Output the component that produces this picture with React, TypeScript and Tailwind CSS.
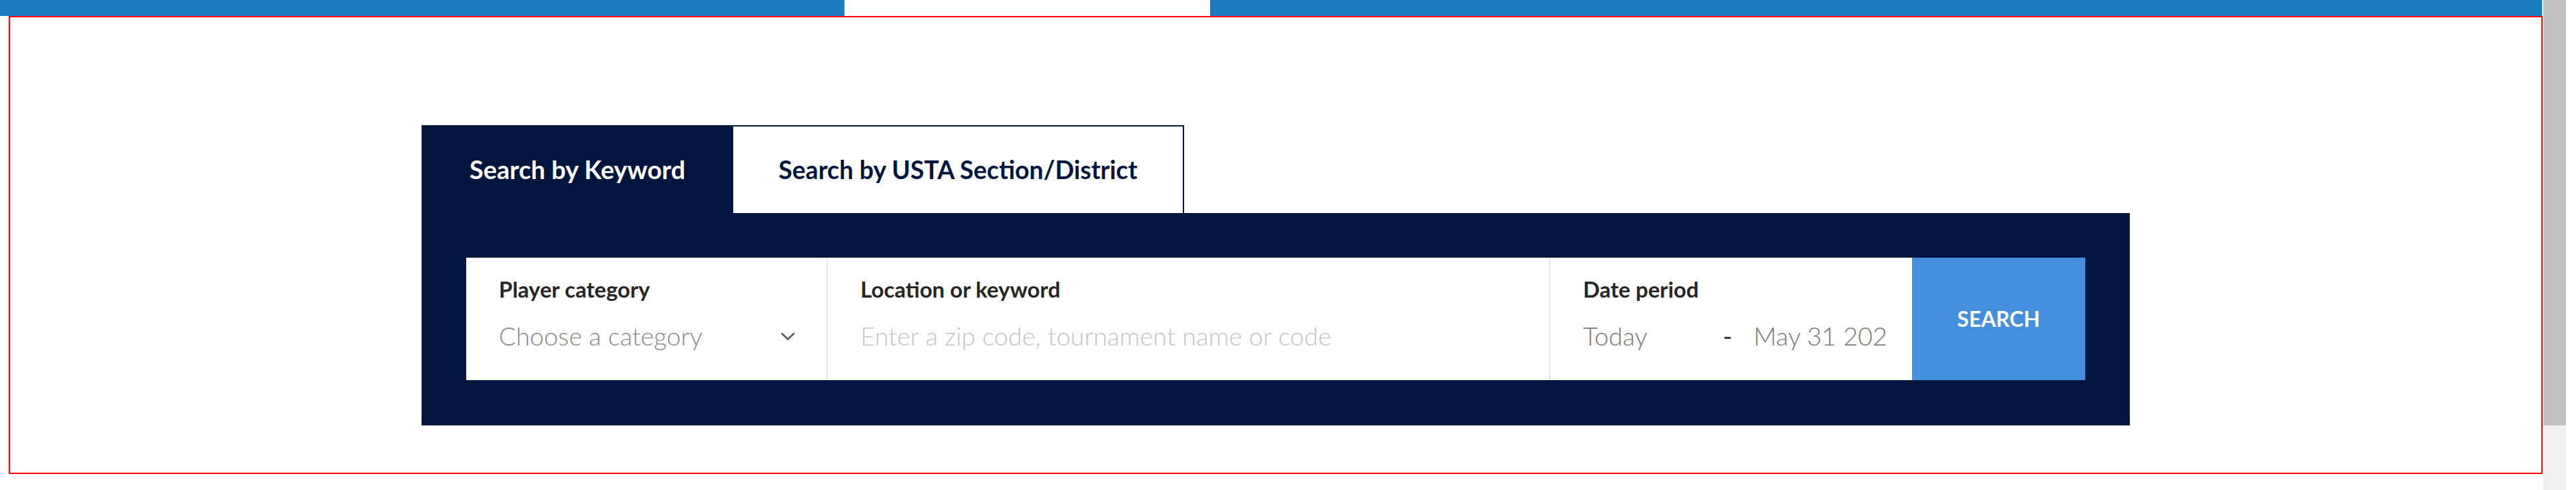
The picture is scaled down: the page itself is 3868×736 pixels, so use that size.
import React from "react";

const navy = "bg-[#01153f]";

function Field({
  label,
  children,
  className,
}: {
  label: string;
  children: React.ReactNode;
  className?: string;
}) {
  return (
    <div className={`flex flex-col pt-[27px] px-[49px] ${className ?? ""}`}>
      <span className="text-[33px] leading-[40px] font-bold text-[#262626]">{label}</span>
      <div className="mt-[29px] flex items-center text-[38px] leading-[43px] font-light">
        {children}
      </div>
    </div>
  );
}

export default function App() {
  return (
    <div className="flex w-[3868px] h-[736px] bg-white font-['Lato','Liberation_Sans',sans-serif] overflow-hidden">
      <div className="w-[3819px] flex flex-col">
        {/* top bar */}
        <div className="flex h-[24px] w-[3817px]">
          <div className="w-[1268px] bg-[#1b7bc1]" />
          <div className="w-[549px] bg-white" />
          <div className="flex-1 bg-[#1b7bc1]" />
        </div>

        {/* highlighted section */}
        <div className="ml-[13px] w-[3805px] h-[688px] border-2 border-[#ff0000]">
          <div className="ml-[618px] mt-[162px] w-[2565px]">
            {/* tabs */}
            <div className="flex h-[132px]">
              <div className={`${navy} w-[468px] flex items-center justify-center text-white text-[38px] font-bold`}>
                Search by Keyword
              </div>
              <div className="w-[677px] bg-white border-t-2 border-r-2 border-[#01153f] flex items-center justify-center text-[#01153f] text-[37.5px] font-bold">
                Search by USTA Section/District
              </div>
            </div>

            {/* search panel */}
            <div className={`${navy} p-[67px] pb-[68px]`}>
              <div className="flex h-[184px] bg-white">
                <Field label="Player category" className="w-[541px]">
                  <span className="text-[#8a8a8a]">Choose a category</span>
                  <svg
                    className="ml-auto mr-[-2px]"
                    width="22"
                    height="12"
                    viewBox="0 0 22 12"
                    fill="none"
                    stroke="#555"
                    strokeWidth="2.5"
                  >
                    <polyline points="1.5,1.5 11,10.5 20.5,1.5" />
                  </svg>
                </Field>
                <div className="w-[2px] bg-[#e6e6e6]" />
                <Field label="Location or keyword" className="w-[1083px]">
                  <span className="text-[#c4c4c4] whitespace-nowrap">Enter a zip code, tournament name or code</span>
                </Field>
                <div className="w-[2px] bg-[#e6e6e6]" />
                <Field label="Date period" className="w-[543px] overflow-hidden">
                  <span className="w-[210px] shrink-0 text-[#7a7a7a]">Today</span>
                  <span className="w-[46px] shrink-0 text-[#333] font-normal">-</span>
                  <span className="whitespace-nowrap text-[#7a7a7a]">May 31 202</span>
                </Field>
                <button className="w-[260px] bg-[#438fdd] text-white text-[32px] font-bold">
                  SEARCH
                </button>
              </div>
            </div>
          </div>
        </div>
      </div>

      {/* scrollbar */}
      <div className="w-[34px] flex flex-col">
        <div className="h-[639px] bg-[#c1c1c1]" />
        <div className="flex-1 bg-[#f0f0f0]" />
      </div>
    </div>
  );
}
